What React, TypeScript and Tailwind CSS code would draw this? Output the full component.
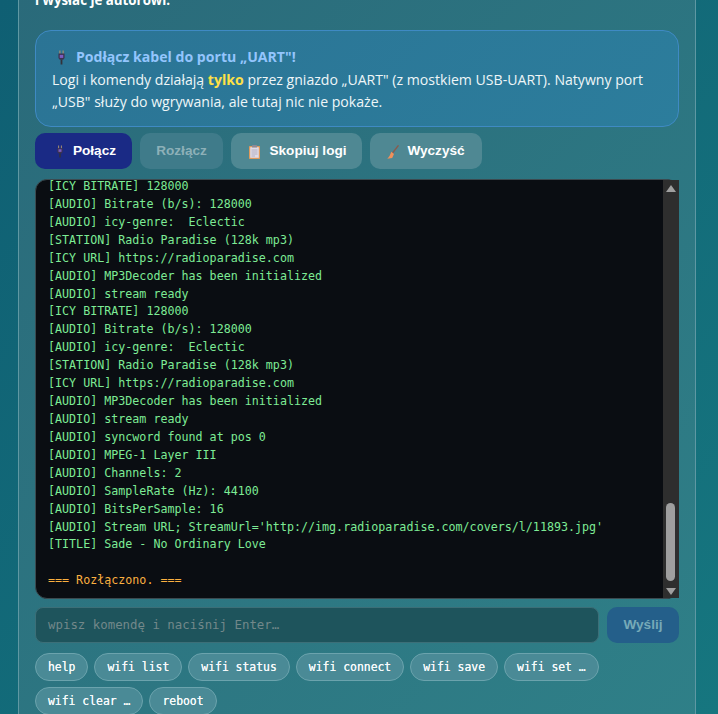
const mono = "font-['DejaVu_Sans_Mono',monospace]"

const logLines = [
  "[ICY BITRATE] 128000",
  "[AUDIO] Bitrate (b/s): 128000",
  "[AUDIO] icy-genre:  Eclectic",
  "[STATION] Radio Paradise (128k mp3)",
  "[ICY URL] https://radioparadise.com",
  "[AUDIO] MP3Decoder has been initialized",
  "[AUDIO] stream ready",
  "[ICY BITRATE] 128000",
  "[AUDIO] Bitrate (b/s): 128000",
  "[AUDIO] icy-genre:  Eclectic",
  "[STATION] Radio Paradise (128k mp3)",
  "[ICY URL] https://radioparadise.com",
  "[AUDIO] MP3Decoder has been initialized",
  "[AUDIO] stream ready",
  "[AUDIO] syncword found at pos 0",
  "[AUDIO] MPEG-1 Layer III",
  "[AUDIO] Channels: 2",
  "[AUDIO] SampleRate (Hz): 44100",
  "[AUDIO] BitsPerSample: 16",
  "[AUDIO] Stream URL; StreamUrl='http://img.radioparadise.com/covers/l/11893.jpg'",
  "[TITLE] Sade - No Ordinary Love",
]

const chips = ["help", "wifi list", "wifi status", "wifi connect", "wifi save", "wifi set …", "wifi clear …", "reboot"]

function PlugIcon({ className }: { className?: string }) {
  return (
    <svg viewBox="0 0 8 16" className={className}>
      <rect x="1.5" y="0" width="1.3" height="4" fill="#a89070" />
      <rect x="5.2" y="0" width="1.3" height="4" fill="#a89070" />
      <path d="M0.5 3.5h7v5L6 10.5H2L0.5 8.5z" fill="#3d3350" />
      <rect x="2" y="5" width="4" height="3.5" fill="#7c5cc0" />
      <rect x="3" y="10.5" width="2" height="5.5" fill="#33323a" />
    </svg>
  )
}

function ClipboardIcon() {
  return (
    <svg viewBox="0 0 11 14" className="w-[11px] h-[14px] shrink-0">
      <rect x="0" y="1" width="11" height="13" rx="0.8" fill="#e09a5c" />
      <rect x="1.2" y="2.2" width="8.6" height="10.6" fill="#dfdbe8" />
      <rect x="3" y="0" width="5" height="2.6" rx="0.5" fill="#8d8a96" />
      <path d="M2.5 5h6M2.5 7h6M2.5 9h6M2.5 11h3.5" stroke="#aaa6b8" strokeWidth="0.8" />
    </svg>
  )
}

function BroomIcon() {
  return (
    <svg viewBox="0 0 12 14" className="w-3 h-[14px] shrink-0">
      <path d="M11.5 0.3 5.5 8" stroke="#8a5a4c" strokeWidth="1.3" />
      <path d="M4.3 6.8 7 9 5.2 13 0.3 13.7C2.2 12 3.3 9.8 4.3 6.8z" fill="#f0905a" />
    </svg>
  )
}

function ActionButton({ children, className }: { children: React.ReactNode; className: string }) {
  return (
    <button className={`h-9 rounded-[10px] flex items-center justify-center font-['Liberation_Sans',sans-serif] text-[13.6px] font-bold ${className}`}>
      {children}
    </button>
  )
}

export default function App() {
  return (
    <div className="h-[714px] overflow-hidden bg-[linear-gradient(135deg,#0f5f73,#16767f)] pl-[18px] pr-[22px]">
      <div className="h-[760px] -mt-[10px] border-x border-[#5f98a3] bg-[linear-gradient(135deg,#2a6a7a,#2f8088)] px-4 font-['Open_Sans',sans-serif] text-white">
        <p className="pt-px text-[13.3px] font-bold leading-[18px]">i wysłać je autorowi.</p>
        <div className="mt-[21px] h-[97px] rounded-2xl border border-[#3f8ac4] bg-[linear-gradient(135deg,#2b7495,#2c7d9c)] pl-4 pr-3 pt-[15px] text-[14.1px] leading-[22.5px] text-[#eef6f8]">
          <div className="flex items-center font-bold text-[#93c5fd]">
            <PlugIcon className="w-[7px] h-[15px] ml-[6px] mr-[11px]" />
            <span>Podłącz kabel do portu „UART"!</span>
          </div>
          <p>
            Logi i komendy działają <b className="text-[#fde047]">tylko</b> przez gniazdo „UART" (z mostkiem USB-UART). Natywny port „USB" służy do wgrywania, ale tutaj nic nie pokaże.
          </p>
        </div>
        <div className="mt-[6px] flex gap-2">
          <ActionButton className="w-[97px] bg-[#1a2a85] pt-px pl-[6px]">
            <PlugIcon className="w-[6px] h-[13px] mr-[10px]" />
            Połącz
          </ActionButton>
          <ActionButton className="w-[83px] bg-[#3f7b8a] text-[#8db0b8]">Rozłącz</ActionButton>
          <ActionButton className="w-[131px] bg-[#4f8893] pt-px pl-[3px]">
            <span className="mr-[9px]"><ClipboardIcon /></span>
            Skopiuj logi
          </ActionButton>
          <ActionButton className="w-[112px] bg-[#4f8893] pt-px">
            <span className="mr-[8px]"><BroomIcon /></span>
            Wyczyść
          </ActionButton>
        </div>
        <div className={`relative mt-[10px] h-[420px] rounded-xl border border-[#3b4a50] bg-[#0a0d12] ${mono} text-[11.68px] leading-[17.92px] text-[#7deb95]`}>
          <div className="h-full overflow-hidden rounded-xl">
            <div className="-mt-[2px] pl-3 whitespace-pre">
              {logLines.map((line, i) => (
                <div key={i}>{line}</div>
              ))}
              <div>&nbsp;</div>
              <div className="text-[#fbb040]">=== Rozłączono. ===</div>
            </div>
          </div>
          <div className="absolute -right-px top-0 bottom-0 w-[16px] bg-[#2e2e2e]">
            <div className="absolute left-[3px] top-[5px] w-0 h-0 border-x-[5px] border-x-transparent border-b-[7px] border-b-[#a0a0a0]" />
            <div className="absolute left-[3px] bottom-[17px] w-[9px] h-[78px] rounded-full bg-[#9f9f9f]" />
            <div className="absolute left-[3px] bottom-[3px] w-0 h-0 border-x-[5px] border-x-transparent border-t-[7px] border-t-[#a0a0a0]" />
          </div>
        </div>
        <div className="mt-2 flex gap-2">
          <div className={`flex-1 h-9 rounded-lg border border-[#3c6f78] bg-[#1e545c] pl-3 ${mono} text-[12.4px] leading-[34px] text-[#72888a]`}>
            wpisz komendę i naciśnij Enter…
          </div>
          <button className="w-[72px] h-9 rounded-[10px] bg-[#245f8a] font-['Liberation_Sans',sans-serif] text-[13.6px] font-bold text-[#76aab8]">
            Wyślij
          </button>
        </div>
        <div className="mt-[10px] flex flex-wrap gap-[6px]">
          {chips.map((c) => (
            <span key={c} className={`h-7 rounded-full border border-[#6ba3ad] bg-[#4a8a96] px-3 ${mono} text-[11.42px] leading-[26px] text-[#f6fafb] [text-shadow:0_0_0.5px_#ffffff]`}>
              {c}
            </span>
          ))}
        </div>
      </div>
    </div>
  )
}
